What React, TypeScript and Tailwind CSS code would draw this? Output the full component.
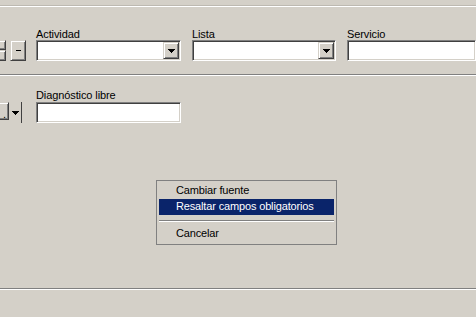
import React from "react";

const sunken =
  "border border-t-[#808080] border-l-[#808080] border-b-white border-r-white bg-white shadow-[inset_1px_1px_0_#404040,inset_-1px_-1px_0_#d4d0c8]";
const raised =
  "border border-t-[#d4d0c8] border-l-[#d4d0c8] border-b-[#404040] border-r-[#404040] bg-[#d4d0c8] shadow-[inset_1px_1px_0_#ffffff,inset_-1px_-1px_0_#808080]";

function Arrow() {
  return (
    <svg width="7" height="4" viewBox="0 0 7 4" shapeRendering="crispEdges">
      <path d="M0 0h7v1h-1v1h-1v1h-1v1h-1v-1h-1v-1h-1v-1h-1z" fill="#000" />
    </svg>
  );
}

function Combo({ width }: { width: string }) {
  return (
    <div className={`${sunken} ${width} flex h-[21px] justify-end p-px`}>
      <div className={`${raised} flex h-[17px] w-[16px] items-center justify-center`}>
        <Arrow />
      </div>
    </div>
  );
}

function Field({ label, children }: { label: string; children: React.ReactNode }) {
  return (
    <div className="flex flex-col">
      <div className="h-[12px] whitespace-nowrap tracking-[-0.1px]">{label}</div>
      {children}
    </div>
  );
}

export default function App() {
  return (
    <div className="relative flex h-[317px] w-[476px] flex-col overflow-hidden bg-[#d4d0c8] font-['Liberation_Sans',Arial,sans-serif] text-[11px] leading-[13px] text-black">
      <div className="mt-[5px] h-px bg-[#bdb9b1]" />
      <div className="h-px bg-white" />

      {/* Row 1 */}
      <div className="mt-[21px] flex items-start">
        <div className="ml-[-10px] mt-[12px] flex h-[21px] w-[16px] flex-col">
          <div className={`${raised} h-[10px]`} />
          <div className={`${raised} h-[11px]`} />
        </div>
        <div className={`${raised} ml-[4px] mt-[12px] flex h-[21px] w-[16px] items-center justify-center`}>
          <div className="ml-px h-px w-[5px] bg-black" />
        </div>
        <div className="ml-[10px]">
          <Field label="Actividad">
            <Combo width="w-[145px]" />
          </Field>
        </div>
        <div className="ml-[11px]">
          <Field label="Lista">
            <Combo width="w-[144px]" />
          </Field>
        </div>
        <div className="ml-[11px]">
          <Field label="Servicio">
            <div className={`${sunken} h-[21px] w-[129px]`} />
          </Field>
        </div>
      </div>

      <div className="mt-[13px] h-px bg-[#808080]" />
      <div className="h-px bg-white" />

      {/* Row 2 */}
      <div className="mt-[13px] flex items-start">
        <div className="mt-[13px] flex h-[21px] items-stretch">
          <div className={`${raised} ml-[-11px] flex h-[18px] w-[20px] items-end justify-end pb-[1px] pr-[2px] leading-[8px]`}>
            .
          </div>
          <div className="flex w-[13px] items-center justify-center border-r border-r-[#404040] pt-px">
            <Arrow />
          </div>
        </div>
        <div className="ml-[14px] flex flex-col">
          <div className="h-[13px] whitespace-nowrap tracking-[-0.1px]">Diagnóstico libre</div>
          <div className={`${sunken} h-[21px] w-[145px]`} />
        </div>
      </div>

      <div className="flex-1" />
      <div className="h-px bg-[#808080]" />
      <div className="h-px bg-white" />
      <div className="h-[27px]" />

      {/* Context menu */}
      <div className="absolute left-[156px] top-[180px] flex h-[65px] w-[181px] flex-col border border-[#808080] bg-[#d4d0c8] px-[2px] pt-[2px] leading-[15px] tracking-[-0.15px]">
        <div className="h-[16px] pl-[17px] whitespace-nowrap">Cambiar fuente</div>
        <div className="h-[16px] bg-[#0a246a] pl-[17px] whitespace-nowrap text-white">
          Resaltar campos obligatorios
        </div>
        <div className="mt-[5px] h-px bg-[#808080]" />
        <div className="h-px bg-white" />
        <div className="mt-[4px] h-[16px] pl-[17px] whitespace-nowrap">Cancelar</div>
      </div>
    </div>
  );
}
